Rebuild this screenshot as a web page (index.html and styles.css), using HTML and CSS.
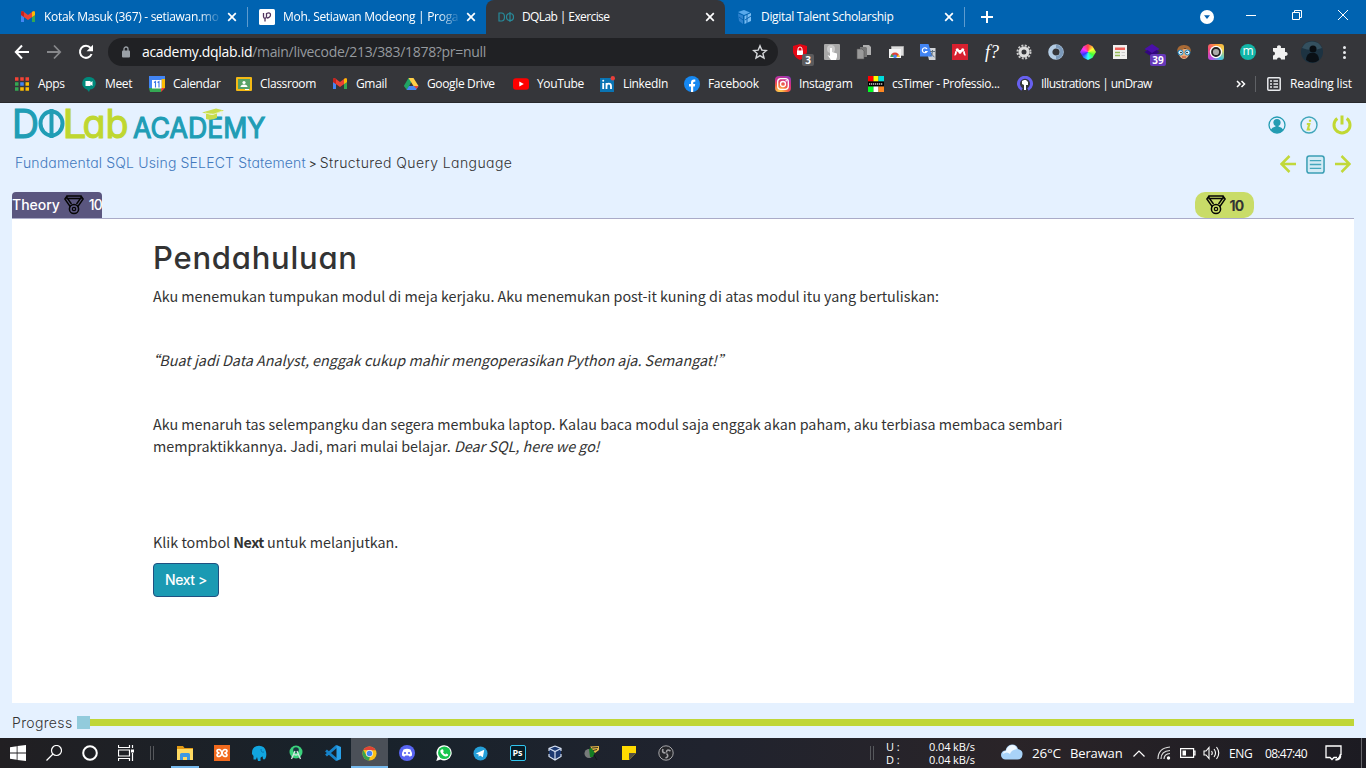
FILE: index.html
```html
<!DOCTYPE html>
<html lang="id">
<head>
<meta charset="utf-8">
<title>DQLab | Exercise</title>
<link rel="stylesheet" href="styles.css">
</head>
<body>
<header class="browser">
  <div class="tabs">
    <div class="tab">
      <svg class="i16" viewBox="0 0 16 16"><path fill="#4285f4" d="M1 4v9h3V6z"/><path fill="#34a853" d="M12 6v7h3V4z"/><path fill="#ea4335" d="M1 3.800C1 2 3 2 4 3l4 3 4-3c1-1 3-1 3 .8V6l-7 5-7-5z"/><path fill="#fbbc04" d="M12 3c1-1 3-1 3 .8V6l-3 2z"/><path fill="#c5221f" d="M1 3.800C1 2 3 2 4 3v5L1 6z"/></svg>
      <span class="tab-title fade">Kotak Masuk (367) - setiawan.mo</span>
      <svg class="close" viewBox="0 0 10 10"><path d="M1.200 1.200l7.600 7.600M8.800 1.200L1.200 8.800"/></svg>
      <i class="tab-sep"></i>
    </div>
    <div class="tab">
      <svg class="i16" viewBox="0 0 16 16"><rect width="16" height="16" rx="1.500" fill="#fff"/><path d="M4.500 4v3.500q0 1.800 1.500 1.800T7.500 7.500V4.500q4-1.500 4 1.200T8 9M6 9v3.500" fill="none" stroke="#50345f" stroke-width="1.300"/></svg>
      <span class="tab-title fade">Moh. Setiawan Modeong | Proga</span>
      <svg class="close" viewBox="0 0 10 10"><path d="M1.200 1.200l7.600 7.600M8.800 1.200L1.200 8.800"/></svg>
    </div>
    <div class="tab active">
      <svg class="i16" viewBox="0 0 16 16"><path d="M1 4h2.500q3 0 3 4t-3 4H1zM12 3v10M8.500 8q0-3.500 3.500-3.500T15.500 8 12 11.500 8.500 8z" fill="none" stroke="#278b9b" stroke-width="1.200"/></svg>
      <span class="tab-title tight">DQLab | Exercise</span>
      <svg class="close" viewBox="0 0 10 10"><path d="M1.200 1.200l7.600 7.600M8.800 1.200L1.200 8.800"/></svg>
    </div>
    <div class="tab">
      <svg class="i16" viewBox="0 0 16 16"><path fill="#58a9ec" d="M1 3l6-2 6 2.500-6 2.500z"/><path fill="#2f83cf" d="M1 4.500l5 2V15l-4-3z"/><path fill="#79bdf3" d="M7.500 7L14 4v8l-6.500 3z"/><path stroke="#0863b2" d="M2 8l4 3M8 11l6-4M10 5v9" fill="none"/></svg>
      <span class="tab-title snug">Digital Talent Scholarship</span>
      <svg class="close" viewBox="0 0 10 10"><path d="M1.200 1.200l7.600 7.600M8.800 1.200L1.200 8.800"/></svg>
      <i class="tab-sep"></i>
    </div>
    <svg class="plus" viewBox="0 0 12 12"><path d="M6 0v12M0 6h12" stroke="#fff" stroke-width="2"/></svg>
    <div class="window-controls">
      <svg class="i16" viewBox="0 0 16 16"><circle cx="8" cy="8" r="7" fill="#fff"/><path d="M5 6.300h6L8 10z" fill="#0863b2"/></svg>
      <svg class="win" viewBox="0 0 10 10"><path d="M0 5.500h10"/></svg>
      <svg class="win" viewBox="0 0 10 10"><path d="M.5 2.500h7v7h-7zM2.500 2.500v-2h7v7h-2"/></svg>
      <svg class="win" viewBox="0 0 10 10"><path d="M0 0l10 10M10 0L0 10"/></svg>
    </div>
  </div>

  <div class="toolbar">
    <div class="nav">
      <svg class="i16" viewBox="0 0 16 16"><path d="M15 8H2.500M8 1.500L1.800 8 8 14.500" fill="none" stroke="#fff" stroke-width="2"/></svg>
      <svg class="i16" viewBox="0 0 16 16"><path d="M1 8h12.500M8 1.500L14.200 8 8 14.500" fill="none" stroke="#87888b" stroke-width="1.800"/></svg>
      <svg class="i16" viewBox="0 0 16 16"><path d="M13.600 10A6 6 0 1 1 12.600 4" fill="none" stroke="#fff" stroke-width="2"/><path d="M15 .8v6.400H8.600z" fill="#fff"/></svg>
    </div>
    <div class="url">
      <svg class="lock" viewBox="0 0 10 12"><rect x="1" y="4.500" width="8" height="7" rx="1" fill="#9aa0a6"/><path d="M3 5V3a2 2 0 0 1 4 0v2" fill="none" stroke="#9aa0a6" stroke-width="1.300"/></svg>
      <span class="address"><b>academy.dqlab.id</b>/main/livecode/213/383/1878?pr=null</span>
      <svg class="star" viewBox="0 0 16 16"><path d="M8 1.800l1.800 4.300 4.600.4-3.500 3 1.100 4.600-4-2.500-4 2.500 1.100-4.600-3.500-3 4.600-.4z" fill="none" stroke="#d5d7da" stroke-width="1.400"/></svg>
    </div>
    <div class="extensions">
      <span class="ext"><svg class="i16" viewBox="0 0 16 16"><path fill="#e30613" d="M8 0l7 2v6q-1 5-7 8Q2 13 1 8V2z"/><rect x="5" y="6.500" width="6" height="4.500" fill="#fff"/><path d="M6 7V5a2 2 0 0 1 4 0v2" stroke="#fff" fill="none"/></svg><em class="badge grey">3</em></span>
      <span class="ext"><svg class="i16" viewBox="0 0 16 16"><rect width="16" height="16" rx="1" fill="#a9a9a9"/><circle cx="7" cy="5" r="4" fill="#ccc"/><path d="M6 4h2v4l5 1.500V13l-1 3H7l-3.500-5L6 12z" fill="#fff"/></svg></span>
      <span class="ext"><svg class="i16" viewBox="0 0 16 16"><path fill="#b0b0b0" d="M7 1h6l2 2v8H7z"/><path fill="#777" d="M4 3h6l1 1v9H4z"/><path fill="#9a9a9a" stroke="#555" stroke-width=".6" d="M1 5h5l2 2v8H1z"/></svg></span>
      <span class="ext"><svg class="i16" viewBox="0 0 16 16"><path d="M3.500 2.500h12v9h-12z" fill="#ddd" stroke="#aaa"/><path d="M1 5h12v9H1z" fill="#f5f5f5"/><path d="M2.500 13a4.500 4.500 0 0 1 9 0z" fill="#e04435"/><path d="M2.500 13a4.500 4.500 0 0 1 1.500-3l2 3z" fill="#36a852"/><path d="M8 13l3-2.500.5 2.500z" fill="#f9c923"/><circle cx="7" cy="12.400" r="1.800" fill="#4a88ec"/></svg></span>
      <span class="ext"><svg class="i16" viewBox="0 0 16 16"><path d="M6 4h9.500v12H9z" fill="#d2d5d9"/><path d="M0 0h8.500l4 12.500H0z" fill="#4285f4"/><path d="M7 5a2.500 2.500 0 1 0 0 2.500H5" fill="none" stroke="#fff" stroke-width="1.200"/><path d="M10 7.500h5M12.500 6v1.500q0 3-2.500 5M11 9q1.500 3 3.500 4" stroke="#607282" fill="none"/></svg></span>
      <span class="ext"><svg class="i16" viewBox="0 0 16 16"><rect width="16" height="16" fill="#d8202f"/><circle cx="5.300" cy="5.800" r="1.600" fill="#fff"/><circle cx="10.700" cy="5.800" r="1.600" fill="#fff"/><circle cx="8" cy="8.200" r="1.500" fill="#fff"/><path d="M2.500 10.800q1.500 0 1.500-3.500M13.500 10.800q-1.500 0-1.500-3.500M5.500 7l5 0" stroke="#fff" stroke-width="1.800" fill="none"/></svg></span>
      <span class="ext whatfont">f?</span>
      <span class="ext"><svg class="i16" viewBox="0 0 16 16"><circle cx="8" cy="8" r="6.500" fill="none" stroke="#c9c9c9" stroke-width="2" stroke-dasharray="2 1.400"/><circle cx="8" cy="8" r="4" fill="none" stroke="#ddd" stroke-width="3"/></svg></span>
      <span class="ext"><svg class="i16" viewBox="0 0 16 16"><circle cx="8" cy="8" r="5.700" fill="none" stroke="#b5cde4" stroke-width="4.200"/><path d="M8 2.300A5.700 5.700 0 0 1 8 13.700" fill="none" stroke="#7c9aba" stroke-width="3.200"/></svg></span>
      <span class="ext"><i class="wheel"></i></span>
      <span class="ext"><svg class="i16" viewBox="0 0 16 16"><rect x="1" y="1" width="14" height="14" fill="#f1f1ef"/><path fill="#f0605a" d="M3 3.500h10v2.500H3z"/><path d="M3 8.500h5M3 11.500h5" stroke="#94ba57" stroke-width="1.300"/><path d="M9.500 8.500H13M9.500 11.500H13" stroke="#ccc"/></svg></span>
      <span class="ext"><svg class="i16" viewBox="0 0 16 16"><path fill="#4a10a8" d="M8 0l7.500 5L8 10 .5 5z"/><path fill="#32067e" d="M.5 8l3-2L8 9l4.500-3 3 2L8 13z"/></svg><em class="badge purple">39</em></span>
      <span class="ext"><svg class="i16" viewBox="0 0 16 16"><path d="M3 5h10v6q-2 4-5 4t-5-4z" fill="#e9ad79"/><path d="M1 8Q1 1 8 1t7 7l-2-2q-3-1-4-2-3 3-6 2z" fill="#a96a35"/><circle cx="4.500" cy="8.500" r="2.500" fill="#d7f0fc" stroke="#1c85c0"/><circle cx="11.500" cy="8.500" r="2.500" fill="#d7f0fc" stroke="#1c85c0"/><circle cx="5" cy="8.500" r=".8"/><circle cx="11" cy="8.500" r=".8"/><path d="M6 13h4" stroke="#b73c30"/></svg></span>
      <span class="ext"><i class="camera"><svg class="i16" viewBox="0 0 16 16"><circle cx="8" cy="8" r="6.200" fill="#fff"/><circle cx="8" cy="8" r="4" fill="#aaa" stroke="#222" stroke-width="1.800"/></svg></i></span>
      <span class="ext"><i class="momentum">m</i></span>
      <span class="ext"><svg class="i16" viewBox="0 0 16 16"><path fill="#f1f1f1" d="M1 4h4.200a2 2 0 1 1 3.600 0H13v4a2 2 0 1 1 0 3.800V15.500H9a2 2 0 0 0-4 0H1v-4a2 2 0 0 0 0-4z"/></svg></span>
      <span class="ext"><svg class="avatar" viewBox="0 0 22 22"><circle cx="11" cy="11" r="11" fill="#1d3342"/><path d="M1 7A11 11 0 0 1 21 7q-10 4-20 0" fill="#34505f"/><circle cx="12" cy="8" r="3.500" fill="#080d12"/><path d="M5 19q0-5 4-7h5q4 2 4 7-6 5-13 0" fill="#0a1016"/></svg></span>
      <span class="ext"><svg class="i16" viewBox="0 0 16 16"><g fill="#e8eaed"><circle cx="8.500" cy="3.500" r="1.500"/><circle cx="8.500" cy="8.500" r="1.500"/><circle cx="8.500" cy="13.500" r="1.500"/></g></svg></span>
    </div>
  </div>

  <nav class="bookmarks">
    <span class="bm"><svg class="i16" viewBox="0 0 16 16"><path d="M1 3h14" stroke="#f44336" stroke-width="3.500" stroke-dasharray="3.500 1.750"/><path d="M1 8h3.500" stroke="#34a853" stroke-width="3.500"/><path d="M6.200 8h3.600" stroke="#4285f4" stroke-width="3.500"/><path d="M11.500 8H15" stroke="#fbbc04" stroke-width="3.500"/><path d="M1 13h3.500" stroke="#34a853" stroke-width="3.500"/><path d="M6.200 13h3.600M11.500 13H15" stroke="#fbbc04" stroke-width="3.500"/></svg>Apps</span>
    <span class="bm"><svg class="i16" viewBox="0 0 16 16"><path d="M8 1a6.300 6.300 0 0 1 1 12.600L8 16l-2-2.600A6.300 6.300 0 0 1 8 1" fill="#00897b"/><path fill="#fff" d="M4.500 5h5v1.500L11.500 5v5l-2-1.500V10h-5z"/></svg>Meet</span>
    <span class="bm"><svg class="i16" viewBox="0 0 16 16"><path fill="#4285f4" d="M0 0h16v12H0z"/><path fill="#34a853" d="M0 12h12v4H1z"/><path fill="#fbbc04" d="M12.500 3H16v9h-3.500z"/><path fill="#ea4335" d="M12 12h4l-4 4z"/><path fill="#fff" d="M3 4h9.500v8.500H3z"/><path d="M5 6.500l1.500-1v6M8.500 6.500l1.500-1v6" fill="none" stroke="#3c78e7" stroke-width="1.100"/></svg>Calendar</span>
    <span class="bm"><svg class="i16" viewBox="0 0 16 16"><rect y="1" width="16" height="14" rx="1" fill="#f5ba15"/><path fill="#57a165" d="M2 3h12v10H2z"/><circle cx="8" cy="6.500" r="1.600" fill="#fff"/><path fill="#fff" d="M4.500 11q0-2.500 3.500-2.500t3.500 2.500z"/><path stroke="#fff" d="M9 13.500h4"/></svg>Classroom</span>
    <span class="bm"><svg class="i16" viewBox="0 0 16 16"><path fill="#4285f4" d="M1 4v9h3V6z"/><path fill="#34a853" d="M12 6v7h3V4z"/><path fill="#ea4335" d="M1 3.800C1 2 3 2 4 3l4 3 4-3c1-1 3-1 3 .8V6l-7 5-7-5z"/><path fill="#fbbc04" d="M12 3c1-1 3-1 3 .8V6l-3 2z"/><path fill="#c5221f" d="M1 3.800C1 2 3 2 4 3v5L1 6z"/></svg>Gmail</span>
    <span class="bm"><svg class="i16" viewBox="0 0 16 16"><path fill="#20a464" d="M5.500 2h2.500v4.500L4 14 .8 10z"/><path fill="#ffcf48" d="M5.500 2h5L15.500 10h-5z"/><path fill="#4688f4" d="M6 10h9.500L13 14H3.500z"/><path fill="#ea4335" d="M11 10h4.500L13.500 13z"/></svg>Google Drive</span>
    <span class="bm"><svg class="i16" viewBox="0 0 16 16"><rect y="2.300" width="16" height="11.400" rx="3" fill="#f00"/><path d="M6.300 5.500v5l4.500-2.500z" fill="#fff"/></svg>YouTube</span>
    <span class="bm"><svg class="i16" viewBox="0 0 16 16"><rect x="1" y="2" width="14" height="14" fill="#0a74b3"/><path d="M4.200 7v6M7.500 7v6M7.500 10q0-2.300 2.200-2.300T12 10v3" stroke="#fff" stroke-width="1.800" fill="none"/><circle cx="4.200" cy="4.700" r="1" fill="#fff"/><circle cx="13.800" cy="2.200" r="2.200" fill="#e7403b"/></svg>LinkedIn</span>
    <span class="bm"><svg class="i16" viewBox="0 0 16 16"><circle cx="8" cy="8" r="8" fill="#1688f1"/><path d="M7 16v-5.500H5V8h2V6.500Q7 3.500 10 3.500h1.300v2.200h-1Q9.200 5.700 9.200 7v1h2l-.4 2.500H9.200V16" fill="#fff"/></svg>Facebook</span>
    <span class="bm"><i class="insta"><svg class="i16" viewBox="0 0 16 16"><rect x="2.700" y="2.700" width="10.600" height="10.600" rx="3" fill="none" stroke="#fff" stroke-width="1.300"/><circle cx="8" cy="8" r="2.500" fill="none" stroke="#fff" stroke-width="1.300"/><circle cx="11.200" cy="4.800" r=".8" fill="#fff"/></svg></i>Instagram</span>
    <span class="bm"><svg class="i16" viewBox="0 0 16 16"><path fill="#f00" d="M0 0h5.500v5.500H0z"/><path fill="#ff0" d="M5.500 0h5v5.500h-5z"/><path fill="#0dd" d="M10.500 0H16v5.500h-5.500z"/><path d="M0 5.500h16v5H0z"/><path fill="#0f2" d="M0 10.500h5.500V16H0z"/><path fill="#fff" d="M5.500 10.500h5V16h-5z"/><path fill="#f82" d="M10.500 10.500H16V16h-5.500z"/><path d="M1 8h14" stroke="#ccc" stroke-width="1.500" stroke-dasharray="1.300 .7"/></svg>csTimer - Professio...</span>
    <span class="bm wide"><svg class="i16" viewBox="0 0 16 16"><path d="M5 13.500A6.500 6.500 0 1 1 11 13.500" fill="none" stroke="#6760ef" stroke-width="3"/><path fill="#fff" d="M5 5l2-1h2l2 2v3H9v5H7V9L5 8z"/></svg>Illustrations | unDraw</span>
    <span class="more"><svg viewBox="0 0 10 8"><path d="M1 1l3 3-3 3M5.500 1l3 3-3 3" fill="none" stroke="#fff" stroke-width="1.500"/></svg></span>
    <span class="bm reading"><svg class="i16" viewBox="0 0 16 16"><rect x="1.800" y="1.800" width="12.400" height="12.400" rx="1" fill="none" stroke="#e8eaed" stroke-width="1.500"/><path d="M4 5h2M4 8h2M4 11h2M7.500 5H12M7.500 8H12M7.500 11H12" stroke="#e8eaed" stroke-width="1.500"/></svg>Reading list</span>
  </nav>
</header>

<main class="page">
  <div class="brand-row">
    <svg class="logo" viewBox="0 0 254 36" role="img" aria-label="DQLab Academy">
      <g font-family="Inter, sans-serif" font-size="39.500" fill="#209db5" stroke="#209db5" stroke-width="1.100">
        <text x="-3" y="32.500" textLength="27" lengthAdjust="spacingAndGlyphs">D</text>
        <g fill="none" stroke-width="4"><ellipse cx="36.500" cy="18.500" rx="11" ry="12"/><path d="M36.500 4v29"/></g>
        <g fill="#bfd730" stroke="#bfd730"><text x="47.500" y="32.500" textLength="24" lengthAdjust="spacingAndGlyphs">L</text><text class="alt-a" x="67.500" y="32.500" textLength="46" lengthAdjust="spacingAndGlyphs">ab</text></g>
        <text x="118" y="33" font-size="28" textLength="132.500" lengthAdjust="spacingAndGlyphs">ACADEMY</text>
      </g>
      <path d="M187 7.500l14-4 8 2-12 4.500zM191 9v5q5 2 11-1V8.500" fill="#c9dd4c"/><path d="M190 8l8 1.500 9-3.500v5" stroke="#eef6c2" fill="none" stroke-width=".8"/>
    </svg>
    <div class="actions">
      <svg viewBox="0 0 18 18"><circle cx="9" cy="9" r="8" fill="#e5f1ff" stroke="#239cb2" stroke-width="1.300"/><circle cx="9" cy="6.500" r="3.600" fill="#239cb2"/><path d="M2.500 14q1.500-3 5-3.500V9h3v1.500q3.500.5 5 3.500-6 6-13 0" fill="#239cb2"/></svg>
      <svg viewBox="0 0 18 18"><circle cx="9" cy="9" r="8" fill="none" stroke="#3fa6ba" stroke-width="1.400"/><path d="M10 3.800v2M6.800 8h2.500L7.800 13.500h2.500" fill="none" stroke="#c4d93e" stroke-width="2.200"/></svg>
      <svg class="power" viewBox="0 0 20 20"><path d="M5.300 3.500a8 8 0 1 0 9.400 0M10 .5v9" fill="none" stroke="#c1d832" stroke-width="3"/></svg>
    </div>
  </div>

  <div class="crumb-row">
    <div class="crumbs"><a>Fundamental SQL Using SELECT Statement</a><span class="gt">&gt;</span><span class="here">Structured Query Language</span></div>
    <div class="pager">
      <svg class="arrow" viewBox="0 0 16 18"><path d="M16 9H2M9.500 1L1.500 9l8 8" fill="none" stroke="#c1d83a" stroke-width="2.500"/></svg>
      <svg class="list" viewBox="0 0 20 20"><rect x="1" y="1" width="18" height="18" rx="2.500" fill="#d3ebf5" stroke="#3b9fb5" stroke-width="1.600"/><path d="M4 6h12M4 10h12M4 14h12" stroke="#45a7bd" stroke-width="1.400"/></svg>
      <svg class="arrow" viewBox="0 0 16 18"><path d="M0 9h14M6.500 1l8 8-8 8" fill="none" stroke="#c1d83a" stroke-width="2.500"/></svg>
    </div>
  </div>

  <div class="points-row">
    <div class="theory"><span>Theory</span><svg class="medal" viewBox="0 0 20 20"><path d="M3 1h14v2.500H3zM3 1L.8 4l5.700 8M17 1l2.200 3-5.700 8M3.500 3.500l4 5.500M16.500 3.500l-4 5.500" fill="none" stroke="#050505" stroke-width="1.400"/><circle cx="10" cy="14" r="4.600" fill="none" stroke="#050505" stroke-width="1.500"/><circle cx="10" cy="14" r="1.700" fill="none" stroke="#050505" stroke-width="1.200"/></svg><span>10</span></div>
    <div class="score"><svg class="medal" viewBox="0 0 20 20"><path d="M3 1h14v2.500H3zM3 1L.8 4l5.700 8M17 1l2.200 3-5.700 8M3.500 3.500l4 5.500M16.500 3.500l-4 5.500" fill="none" stroke="#050505" stroke-width="1.400"/><circle cx="10" cy="14" r="4.600" fill="none" stroke="#050505" stroke-width="1.500"/><circle cx="10" cy="14" r="1.700" fill="none" stroke="#050505" stroke-width="1.200"/></svg><span>10</span></div>
  </div>

  <article class="lesson">
    <h1>Pendahuluan</h1>
    <p>Aku menemukan tumpukan modul di meja kerjaku. Aku menemukan post-it kuning di atas modul itu yang bertuliskan:</p>
    <p class="quote"><em>“Buat jadi Data Analyst, enggak cukup mahir mengoperasikan Python aja. Semangat!”</em></p>
    <p class="long">Aku menaruh tas selempangku dan segera membuka laptop. Kalau baca modul saja enggak akan paham, aku terbiasa membaca sembari<br>mempraktikkannya. Jadi, mari mulai belajar. <em>Dear SQL, here we go!</em></p>
    <p class="last">Klik tombol <strong>Next</strong> untuk melanjutkan.</p>
    <button class="next" type="button">Next &gt;</button>
  </article>

  <div class="progress"><span>Progress</span><i class="knob"></i><i class="track"></i></div>
</main>

<footer class="taskbar">
  <span class="sys"><svg class="i16" viewBox="0 0 16 16"><path fill="#fff" d="M0 2.200L6.700 1.200v6.400H0zM7.500 1.100L16 0v7.600H7.500zM0 8.400h6.700v6.400L0 13.800zM7.500 8.400H16V16l-8.500-1.100z"/></svg></span>
  <span class="sys"><svg class="i16" viewBox="0 0 16 16"><circle cx="10.500" cy="5.500" r="5" fill="none" stroke="#fff" stroke-width="1.200"/><path d="M7 9L.5 15.500" stroke="#fff" stroke-width="1.300"/></svg></span>
  <span class="sys"><svg class="i16" viewBox="0 0 16 16"><circle cx="8" cy="8" r="6.800" fill="none" stroke="#fff" stroke-width="2"/></svg></span>
  <span class="sys"><svg class="i16" viewBox="0 0 16 16"><path d="M.5 0v2.500h11V0M.5 16v-2.500h11V16M.5 5h11v6H.5zM14.500 0v3M14.500 8v8" fill="none" stroke="#fff" stroke-width="1.200"/><path fill="#fff" d="M13 4.500h3v3h-3z"/></svg></span>
  <i class="grip left"></i>
  <span class="app open"><svg class="i16" viewBox="0 0 16 16"><path fill="#e29a15" d="M0 1h6l1.500 2H16v4H0z"/><path fill="#ffda62" d="M0 4h16v11H0z"/><path fill="#3e98e2" d="M3 15V9.500Q3 8 4.500 8h7Q13 8 13 9.500V15h-3v-3H6v3z"/></svg></span>
  <span class="app"><svg class="i16" viewBox="0 0 16 16"><rect width="16" height="16" fill="#f16a1e"/><path d="M5.500 8Q3 7.500 3 6t2-1.500T8 8t3 3.500T13 10t-2.500-2Q13 7.500 13 6t-2-1.500T8 8t-3 3.500T3 10t2.500-2" fill="none" stroke="#fff" stroke-width="1.600"/></svg></span>
  <span class="app"><svg class="i16" viewBox="0 0 16 16"><path fill="#11a5df" d="M1 9Q.5 1 8 .800q6 0 7 6 1 5-1 7.500h-2l-.5-3-2 1.500V16H7l-1-4-1 2.500H2.500V11z"/><path d="M10 4q0 4 3 3" fill="none" stroke="#0674ad"/></svg></span>
  <span class="app"><svg class="i16" viewBox="0 0 16 16"><circle cx="8" cy="7" r="6.500" fill="#3bd27c"/><circle cx="8" cy="5" r="2.800" fill="#193640"/><path d="M7 6L3.500 14M9 6l3.500 8M5 9q3 2 6 0" fill="none" stroke="#d8e5e4" stroke-width="1.300"/></svg></span>
  <span class="app"><svg class="i16" viewBox="0 0 16 16"><path d="M12 1L1 10.500M1 5.500L12 15" stroke="#1683ca" stroke-width="2.800"/><path fill="#28a1ea" d="M11.500 0L16 2v12l-4.500 2z"/></svg></span>
  <span class="app open current"><svg class="chrome" viewBox="0 0 16 16"><circle cx="8" cy="8" r="7.500" fill="#fbc116"/><path fill="#e04336" d="M1.500 4.300A7.500 7.500 0 0 1 14.500 4.500H8z"/><path fill="#36a350" d="M1.500 4.300L5 11l3.500 0L7.500 15.500A7.500 7.500 0 0 1 1.500 4.300"/><circle cx="8" cy="8" r="3.700" fill="#eee"/><circle cx="8" cy="8" r="2.900" fill="#4285f4"/></svg></span>
  <span class="app"><svg class="i16" viewBox="0 0 16 16"><circle cx="8" cy="8" r="8" fill="#5865f2"/><path d="M4.500 4.500q3.500-1.500 7 0 1.800 3 1.500 6-2 1.500-2.500 1l-1-1h-3l-1 1q-.5.500-2.500-1-.3-3 1.500-6" fill="#fff"/><circle cx="6" cy="8" r="1.100" fill="#5865f2"/><circle cx="10" cy="8" r="1.100" fill="#5865f2"/></svg></span>
  <span class="app"><svg class="i16" viewBox="0 0 16 16"><path d="M8.300.2A7.600 7.600 0 1 1 4.500 14.500L.3 16l1.300-4.300A7.600 7.600 0 0 1 8.300.2" fill="#fff"/><circle cx="8.300" cy="7.800" r="6.300" fill="#18c44d"/><path d="M5.500 4.500L7 4.300l.7 2-.7 1q.8 1.500 2.300 2.200l.9-1 2 .9-.3 1.400q-3 2-6-1.500t-.4-4.800" fill="#fff"/></svg></span>
  <span class="app"><svg class="tele" viewBox="0 0 16 16"><circle cx="8" cy="8" r="7.500" fill="#259fd8"/><path d="M3 8l9-4-1.500 8-3-2-1.500 1.500L6 9z" fill="#fff"/></svg></span>
  <span class="app"><i class="ps">Ps</i></span>
  <span class="app"><svg class="i16" viewBox="0 0 16 16"><path fill="#1c3970" d="M8 1l6 2.500v8L8 15l-6-3.500v-8z"/><path d="M2 3.500L8 6.500l6-3M8 7v8M8 1L2 3.500v2.500M8 1l6 2.500v2.500M2 9v2.500L8 15l6-3.500V9" fill="none" stroke="#d5e0f2" stroke-width="1.200"/></svg></span>
  <span class="app"><svg class="i16" viewBox="0 0 16 16"><circle cx="5" cy="8.500" r="4.500" fill="#777b7a"/><path fill="#167c23" d="M5 4l4-2 2 5-2 5H6z"/><path fill="#e6b949" d="M6 1.500L15 1v4l-4 3-2-3z"/><path d="M8 3l6-.5M9 5.500l4-1M10 10l3 5" stroke="#101114" stroke-width=".8"/></svg></span>
  <span class="app"><svg class="i16" viewBox="0 0 16 16"><path fill="#ffda00" d="M1 1h14v7l-7 7H1z"/><path fill="#555043" d="M8 15V8h7z"/></svg></span>
  <span class="app"><svg class="i16" viewBox="0 0 16 16"><circle cx="8" cy="8" r="7.200" fill="#26272b" stroke="#a7a7aa" stroke-width="1"/><path d="M7.500 8Q3.500 8 5 4M8.500 7.500q0-4 4-1.500M8.500 8.500q3 3-1 4.500" fill="none" stroke="#a3a3a6" stroke-width="1.600"/></svg></span>
  <div class="tray">
    <i class="grip"></i>
    <div class="speed"><span>U :</span><span>0.04 kB/s</span><span>D :</span><span>0.04 kB/s</span></div>
    <svg class="cloud" viewBox="0 0 22 16"><path d="M4.500 15.500A4.500 4.500 0 0 1 4.500 6.500Q6 1 11 .5q5 0 6 4.500 5 1 4.500 5.500-.5 5-5 5z" fill="#a9d3f8"/><path d="M5 7q1-5 6-6 4 0 5 4-6 1-7 5-3-3-7 0 0-3 3-3" fill="#eff8ff"/></svg>
    <span class="temp">26°C</span><span class="weather">Berawan</span>
    <svg class="chev" viewBox="0 0 12 7"><path d="M.5 6.500L6 1l5.500 5.500" fill="none" stroke="#fff" stroke-width="1.200"/></svg>
    <svg class="wifi" viewBox="0 0 14 14"><path d="M1 13Q1 2 13 1M4 13q0-8 9-8.500M7 13q0-5 6-5.500" fill="none" stroke="#ddd" stroke-width="1.200"/><circle cx="11.500" cy="12" r="1.700" fill="#fff"/></svg>
    <svg class="battery" viewBox="0 0 16 10"><path d="M.6.600h13v8.800H.6zM13.500 3H15v4h-1.500" fill="none" stroke="#fff" stroke-width="1.200"/><path fill="#fff" d="M2.500 2.500h3.500v5H2.500z"/></svg>
    <svg class="sound" viewBox="0 0 17 14"><path d="M1 5h2l3-3.500v11L3 9H1zM8.500 5q1.500 2 0 4M11 3q3 4 0 8M13.500 1q4.500 6 0 12" fill="none" stroke="#fff" stroke-width="1.100"/></svg>
    <span class="lang">ENG</span><span class="clock">08:47:40</span>
    <svg class="notice" viewBox="0 0 17 16"><path d="M12 12.500H9l-2 2-2-2H1V1h15v9" fill="none" stroke="#fff" stroke-width="1.300"/><path d="M15.500 9q1 6-5 6 4-1 5-6" fill="#fff" stroke="#fff" stroke-width="1.300"/></svg>
    <i class="peek"></i>
  </div>
</footer>
</body>
</html>
```
FILE: styles.css
```css
* { box-sizing: border-box; }
body { margin: 0; width: 1366px; height: 768px; overflow: hidden; display: flex; flex-direction: column; background: #e5f1ff; font-family: "Open Sans", "Noto Sans", sans-serif; font-size: 12px; color: #fff; }
svg { display: block; flex: none; }
i { font-style: normal; }
.i16 { width: 16px; height: 16px; }
.browser { height: 103px; flex: none; background: #35363a; border-bottom: 1px solid #28292c; }

/* Tab strip */
.tabs { height: 34px; background: #0063b1; display: flex; align-items: center; padding-left: 8px; }
.tab { position: relative; width: 239px; height: 34px; display: flex; align-items: center; padding: 0 10px 0 12px; }
.tab.active { background: #35363a; border-radius: 8px 8px 0 0; }
.tab-title { margin-left: 8px; width: 176px; white-space: nowrap; line-height: 18px; letter-spacing: -.3px; }
.tight { letter-spacing: -.6px; }
.snug { letter-spacing: -.33px; }
.fade { mask-image: linear-gradient(90deg, #000 155px, transparent 178px); }
.close { width: 10px; height: 10px; margin-left: 7px; }
.close path { stroke: #fff; stroke-width: 1.7; }
.tab-sep { position: absolute; right: -1px; top: 7px; width: 1px; height: 20px; background: #5d9bcf; }
.plus { width: 12px; height: 12px; margin-left: 17px; }
.window-controls { margin-left: auto; display: flex; align-items: center; padding-right: 18px; }
.window-controls .i16 { margin-right: 31px; }
.win { width: 10px; height: 10px; margin: -5px 0 0 36px; }
.window-controls .i16 + .win { margin-left: 0; }
.win path { fill: none; stroke: #fff; }

/* Address row */
.toolbar { height: 36px; display: flex; align-items: center; }
.nav { width: 108px; display: flex; gap: 16px; padding-left: 14px; }
.url { width: 670px; height: 28px; border-radius: 14px; background: #202124; display: flex; align-items: center; padding: 0 10px 0 13px; }
.lock { width: 10px; height: 12px; }
.address { margin-left: 11px; flex: 1; font-size: 14px; line-height: 20px; padding-bottom: 1px; letter-spacing: -.31px; color: #969a9f; white-space: nowrap; }
.address b { color: #fff; font-weight: 400; }
.star { width: 16px; height: 16px; }
.extensions { margin-left: 6px; display: grid; grid-template-columns: repeat(18, 32px); }
.ext { position: relative; height: 24px; display: flex; align-items: center; justify-content: center; }
.badge { position: absolute; top: 14px; height: 12px; border-radius: 2px; font: 700 10px/12px "Open Sans", sans-serif; text-align: center; }
.grey { left: 18px; width: 12px; background: #5b5b5d; }
.purple { left: 14px; width: 16px; background: #6538b9; }
.whatfont { font: italic 18px "Liberation Serif", serif; }
.wheel { width: 16px; height: 16px; background: conic-gradient(#f44, #ff3, #4f3, #3ff, #33f, #f3f, #f44); clip-path: polygon(50% 0, 78% 14%, 100% 50%, 78% 86%, 50% 100%, 22% 86%, 0 50%, 22% 14%); }
.camera { border-radius: 3px; background: conic-gradient(#f99b35, #f2d34e, #40c7df, #b94ae7, #f3457a, #f99b35); }
.momentum { width: 16px; height: 16px; border-radius: 50%; background: #13b6a8; text-align: center; line-height: 14px; }
.avatar { width: 22px; height: 22px; }

/* Bookmarks */
.bookmarks { height: 28px; display: grid; align-items: center; padding-left: 14px; grid-template-columns: 67px 68px 87px 96px 71px 110px 86px 85px 91px 93px 149px 219px 19px 110px; }
.bm { display: flex; align-items: center; gap: 8px; white-space: nowrap; letter-spacing: -.35px; line-height: 16px; }
.bm.wide { letter-spacing: -.56px; }
.insta { border-radius: 4px; background: radial-gradient(circle at 30% 100%, #fdc24b 10%, #f2603f 40%, #d32f83 65%, #7a3ecb); }
.more svg { width: 10px; height: 8px; }
.bm.reading { height: 16px; border-left: 1px solid #5f6165; padding: 0 0 0 10px; letter-spacing: -.2px; }

/* Course page */
.page { height: 635px; flex: none; padding: 0 12px; color: #333; font-family: Inter, sans-serif; font-feature-settings: "cv11"; display: flex; flex-direction: column; }
.alt-a { font-feature-settings: "cv11"; }
.brand-row { height: 43px; display: flex; padding: 2px 2px 0 3px; }
.logo { width: 254px; height: 36px; overflow: visible; }
.actions { margin-left: auto; height: 40px; display: flex; align-items: center; gap: 14px; }
.actions svg { width: 18px; height: 18px; }
.actions .power { width: 20px; height: 20px; }
.crumb-row { height: 46px; display: flex; padding: 6px 3px 0; }
.crumbs { font-size: 14px; line-height: 22px; white-space: nowrap; }
.crumbs a { color: #4279bd; font-weight: 300; letter-spacing: .16px; }
.gt { margin: 0 3px 0 3px; font-size: 12px; }
.here { letter-spacing: .42px; font-weight: 350; }
.pager { margin-left: auto; display: flex; align-items: center; height: 24px; gap: 10px; }
.arrow { width: 16px; height: 18px; }
.list { width: 19px; height: 19px; }
.points-row { height: 27px; border-bottom: 1px solid #aaabc8; display: flex; justify-content: space-between; padding-right: 100px; font-size: 14px; }
.theory { width: 90px; height: 26px; background: #5a567f; color: #fff; border-radius: 4px 4px 0 0; display: flex; align-items: center; justify-content: space-between; font-weight: 500; letter-spacing: 0; }
.theory span:last-child { letter-spacing: -.8px; }
.theory span { line-height: 18px; padding-bottom: 1px; }
.medal { width: 20px; height: 20px; }
.score { width: 59px; height: 26px; background: #c9dc68; border-radius: 10px; display: flex; align-items: center; justify-content: center; gap: 4px; font-weight: 700; letter-spacing: -.8px; }
.lesson { height: 484px; background: #fff; padding: 20px 141px 0; font: 14.34px/22px "Noto Sans CJK SC", sans-serif; white-space: nowrap; }
.lesson h1 { margin: 0; font: 450 31px/38px Inter, sans-serif; letter-spacing: .75px; font-feature-settings: "cv11"; }
.lesson p { margin: 8px 0 42px; }
.lesson p + p { margin-top: 0; }
.lesson .quote { margin-left: -8px; }
.lesson .long { margin-bottom: 74px; }
.lesson .last { margin-bottom: 10px; }
.last strong { letter-spacing: -.5px; }
.next { display: block; width: 66px; height: 34px; padding: 0 0 1px; border: 1px solid #205081; border-radius: 4px; color: #fff; background: #1b9ab3; font: 500 14px Inter, sans-serif; letter-spacing: -.4px; }
.progress { height: 32px; display: flex; align-items: center; padding-top: 7px; font-size: 14px; font-weight: 350; }
.progress span { width: 65px; letter-spacing: .35px; }
.knob { width: 13px; height: 13px; background: #92cbdc; }
.track { flex: 1; height: 7px; background: #c0d638; }

/* Taskbar */
.taskbar { height: 30px; flex: none; display: flex; align-items: center; background: linear-gradient(90deg, #211f22, #18222b 25%, #20232e 52%, #2a2428 74%, #1c1b22); }
.sys, .app { width: 36px; height: 30px; display: flex; align-items: center; justify-content: center; }
.app { width: 37px; flex: none; position: relative; }
.grip { width: 4px; height: 14px; border: solid #56585c; border-width: 0 1px; }
.grip.left { margin: 0 12px 0 6px; }
.open::after { content: ""; position: absolute; left: 5px; right: 4px; bottom: 0; height: 2px; background: #76b9ed; }
.current { background: #4b5058; }
.current::after { left: 0; right: 0; }
.chrome, .tele { width: 15px; height: 15px; }
.ps { width: 16px; height: 16px; border: 1px solid #31c5ef; border-radius: 2px; background: #081d27; font: 700 9px/13px "Open Sans", sans-serif; text-align: center; }
.tray { margin-left: auto; width: 496px; height: 30px; display: flex; align-items: center; white-space: nowrap; }
.speed { margin-left: 12px; width: 115px; display: grid; grid-template-columns: 43px auto; font-size: 11px; line-height: 13px; letter-spacing: -.1px; }
.cloud { width: 22px; height: 16px; margin-top: -2px; }
.temp { margin-left: 9px; width: 38px; font-size: 13.5px; letter-spacing: -.2px; }
.weather { width: 63px; font-size: 13px; letter-spacing: -.15px; }
.chev { width: 12px; height: 7px; }
.wifi { width: 14px; height: 14px; margin-left: 12px; }
.battery { width: 16px; height: 10px; margin-left: 9px; }
.sound { width: 17px; height: 14px; margin-left: 7px; }
.lang { margin-left: 9px; width: 36px; letter-spacing: -.4px; }
.clock { width: 60px; letter-spacing: -.7px; }
.notice { width: 17px; height: 16px; }
.peek { width: 1px; height: 30px; margin-left: 19px; background: #66666b; }
```
